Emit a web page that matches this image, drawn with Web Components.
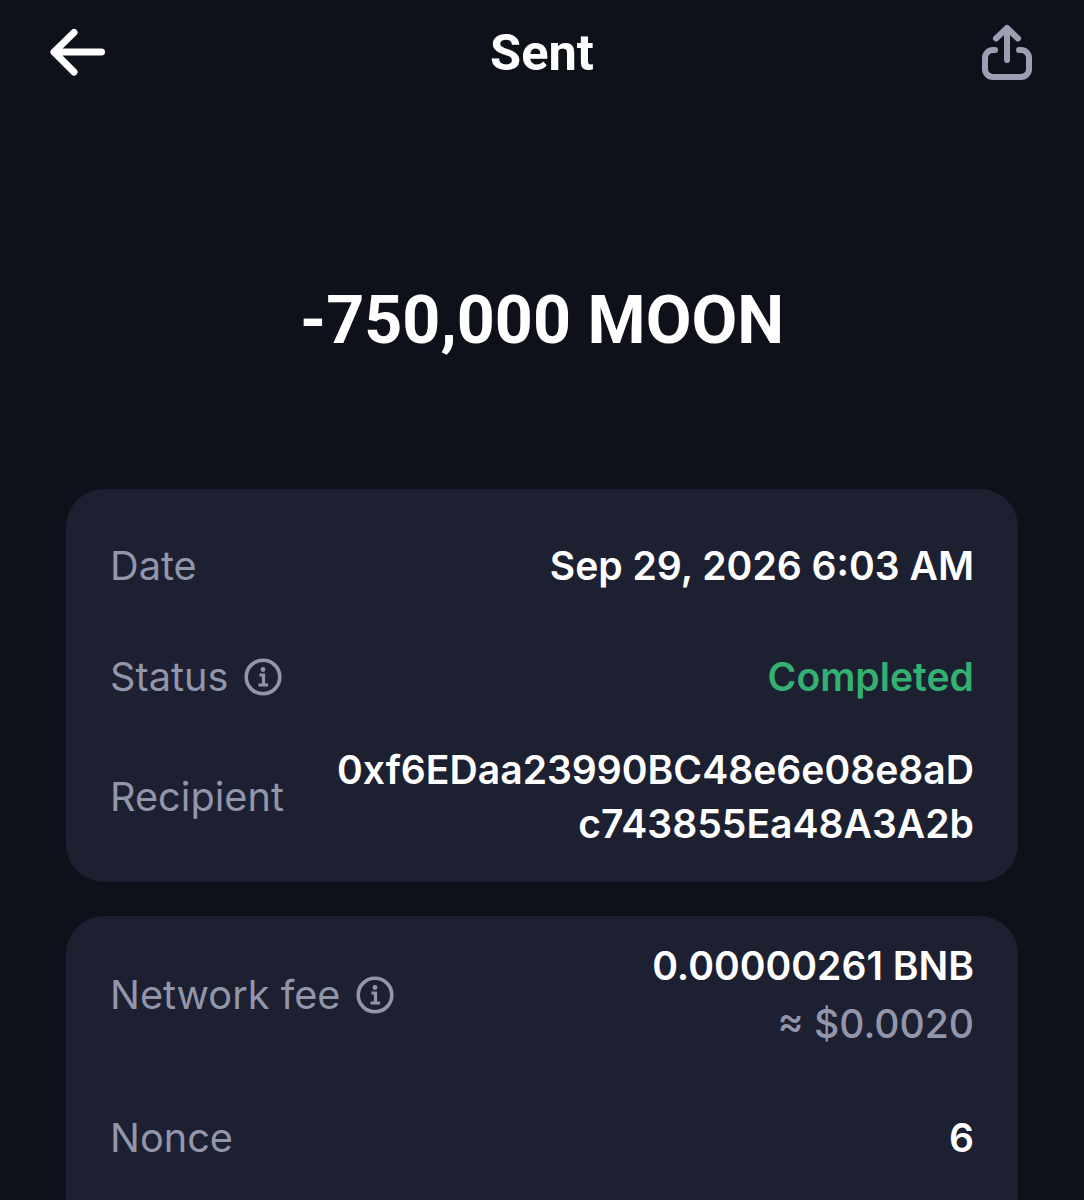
<!DOCTYPE html>
<html lang="en">
<head>
<meta charset="utf-8">
<title>Sent</title>
<style>
    html, body { margin: 0; height: 1200px; overflow: hidden; background: #0e111a; }
    body { font-family: Inter, "Noto Sans", sans-serif; color: #fff; }
    tx-card + tx-card { margin-top: 34px; }
</style>
</head>
<body>
<tx-screen>
    <tx-header slot="header" title="Sent"></tx-header>
    <tx-amount slot="amount">-750,000 MOON</tx-amount>
    <tx-card>
        <tx-row label="Date" height="112">Sep 29, 2026 6:03 AM</tx-row>
        <tx-row label="Status" info height="110"><span style="color:#33b072">Completed</span></tx-row>
        <tx-row label="Recipient" height="129"><span>0xf6EDaa23990BC48e6e08e8aD<br>c743855Ea48A3A2b</span></tx-row>
    </tx-card>
    <tx-card>
        <tx-row label="Network fee" info height="116">
            <span style="display:block;padding-top:4px">0.00000261 BNB<span style="display:block;color:#9296aa;font-weight:500;line-height:62px">≈ $0.0020</span></span>
        </tx-row>
        <tx-row label="Nonce" height="170">6</tx-row>
    </tx-card>
</tx-screen>

<script>
// SCREEN SHELL: HEADER, AMOUNT, THEN THE CARDS
class TxScreen extends HTMLElement {
    constructor() {
        super();
        this.attachShadow({ mode: 'open' });
        this.shadowRoot.innerHTML = `
            <style>
                :host { display: block; }
                .cards { display: block; padding: 0 66px; }
            </style>
            <slot name="header"></slot>
            <slot name="amount"></slot>
            <section class="cards"><slot></slot></section>
        `;
    }
}

class TxHeader extends HTMLElement {
    constructor() {
        super();
        this.attachShadow({ mode: 'open' });
        this.shadowRoot.innerHTML = `
            <style>
                :host { display: flex; align-items: center; justify-content: space-between; height: 104px; padding: 0 46px; }
                h1 { margin: 0; font-family: Roboto, sans-serif; font-size: 50.5px; font-weight: 700; color: #fff; }
                svg { display: block; }
            </style>
            <svg width="64" height="64" viewBox="0 0 64 64" fill="none" stroke="#fff" stroke-width="7" stroke-linecap="round" stroke-linejoin="round">
                <path d="M8 32H55.5M28 12.5L8 32L28 52"/>
            </svg>
            <h1></h1>
            <svg width="64" height="64" viewBox="0 0 64 64" fill="none" stroke="#9b9fb2" stroke-width="6" stroke-linecap="round" stroke-linejoin="round">
                <path d="M33 8V40M22 18.5L33 8L44 18.5"/>
                <path d="M21 30H19C14.5 30 11 33.5 11 38V49C11 53.5 14.5 57 19 57H47C51.5 57 55 53.5 55 49V38C55 33.5 51.5 30 47 30H45"/>
            </svg>
        `;
        this.shadowRoot.querySelector('h1').textContent = this.getAttribute('title');
    }
}

class TxAmount extends HTMLElement {
    constructor() {
        super();
        this.attachShadow({ mode: 'open' });
        this.shadowRoot.innerHTML = `
            <style>
                :host { display: flex; justify-content: center; align-items: center; height: 385px; padding-top: 46px; box-sizing: border-box; font-family: Roboto, sans-serif; font-size: 66.4px; font-weight: 700; color: #fff; }
            </style>
            <slot></slot>
        `;
    }
}

class TxCard extends HTMLElement {
    constructor() {
        super();
        this.attachShadow({ mode: 'open' });
        this.shadowRoot.innerHTML = `
            <style>
                :host { display: block; background: #1d2030; border-radius: 38px; padding: 21px 44px 21px 45px; }
            </style>
            <slot></slot>
        `;
    }
}

class TxRow extends HTMLElement {
    constructor() {
        super();
        this.attachShadow({ mode: 'open' });
        this.shadowRoot.innerHTML = `
            <style>
                :host { display: flex; align-items: center; justify-content: space-between; font-size: 39.7px; }
                .label { display: flex; align-items: center; gap: 16px; color: #9296aa; white-space: nowrap; margin-left: -1px; }
                .value { text-align: right; font-weight: 600; color: #fff; line-height: 54px; white-space: nowrap; font-size: 39.1px; }
                svg { display: block; }
            </style>
            <div class="label">
                <span id="label"></span>
                <svg id="info" width="38" height="38" viewBox="0 0 38 38" fill="none" stroke="#9296aa" stroke-width="3.6">
                    <circle cx="19" cy="19" r="16.8"/>
                    <circle cx="19" cy="11.5" r="2.4" fill="#9296aa" stroke="none"/>
                    <path d="M15.5 17H19.5V27M14.5 27H24" stroke-width="3.2"/>
                </svg>
            </div>
            <div class="value"><slot></slot></div>
        `;
        this.shadowRoot.querySelector('#label').textContent = this.getAttribute('label');
        if (!this.hasAttribute('info')) this.shadowRoot.querySelector('#info').remove();
        this.style.height = this.getAttribute('height') + 'px';
    }
}

// REGISTER THE CUSTOM ELEMENTS
customElements.define('tx-screen', TxScreen);
customElements.define('tx-header', TxHeader);
customElements.define('tx-amount', TxAmount);
customElements.define('tx-card', TxCard);
customElements.define('tx-row', TxRow);
</script>
</body>
</html>
